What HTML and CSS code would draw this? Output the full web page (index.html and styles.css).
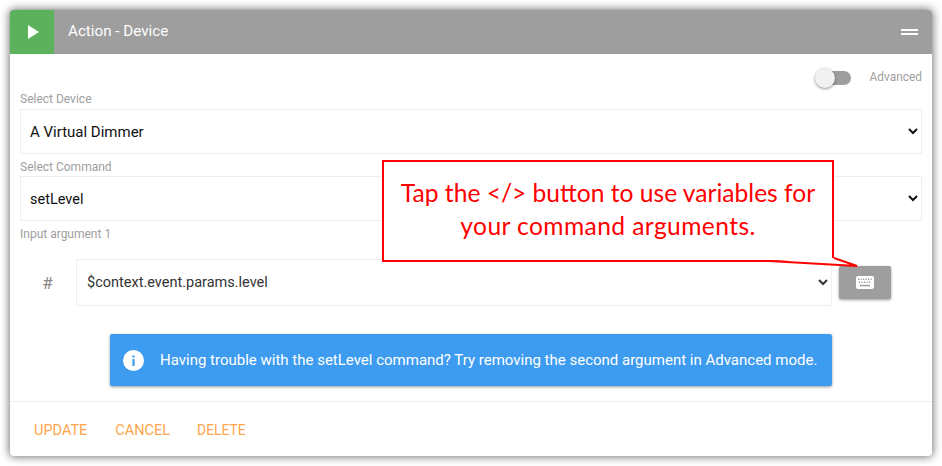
FILE: index.html
```html
<!DOCTYPE html>
<html lang="en">
<head>
<meta charset="utf-8">
<title>Action - Device</title>
<link rel="stylesheet" href="styles.css">
</head>
<body>
<div class="card">
  <header class="head">
    <div class="play"><svg width="11" height="14" viewBox="0 0 11 14"><path d="M0 0L11 7L0 14Z" fill="#fff"/></svg></div>
    <div class="title">Action - Device</div>
    <div class="menu"><span></span><span></span></div>
  </header>
  <main class="body">
    <div class="adv">
      <div class="toggle"><span class="track"></span><span class="knob"></span></div>
      <span class="adv-label">Advanced</span>
    </div>
    <label class="lbl first">Select Device</label>
    <select class="sel device"><option>A Virtual Dimmer</option></select>
    <label class="lbl cmd">Select Command</label>
    <select class="sel setlevel"><option>setLevel</option></select>
    <label class="lbl arg">Input argument 1</label>
    <div class="arg-row">
      <span class="hash">#</span>
      <select class="sel var"><option>$context.event.params.level</option></select>
      <button class="kbd">
        <svg width="18" height="13" viewBox="0 0 18 13"><rect width="18" height="13" rx="2" fill="#fff"/><g fill="#9e9e9e"><rect x="2" y="2.5" width="1.2" height="1.5"/><rect x="4.5" y="2.5" width="1.2" height="1.5"/><rect x="7" y="2.5" width="1.2" height="1.5"/><rect x="9.5" y="2.5" width="1.2" height="1.5"/><rect x="12" y="2.5" width="1.2" height="1.5"/><rect x="14.5" y="2.5" width="1.2" height="1.5"/><rect x="3" y="5.5" width="1.2" height="1.5"/><rect x="5.5" y="5.5" width="1.2" height="1.5"/><rect x="8" y="5.5" width="1.2" height="1.5"/><rect x="10.5" y="5.5" width="1.2" height="1.5"/><rect x="13" y="5.5" width="1.2" height="1.5"/><rect x="4" y="8.8" width="10" height="1.5"/></g></svg>
      </button>
    </div>
    <div class="alert">
      <svg class="info" width="21" height="21" viewBox="0 0 21 21"><circle cx="10.5" cy="10.5" r="10.5" fill="#fff"/><rect x="9.4" y="9" width="2.2" height="7" fill="#3d9bf0"/><rect x="9.4" y="5.4" width="2.2" height="2.2" fill="#3d9bf0"/></svg>
      <span>Having trouble with the setLevel command? Try removing the second argument in Advanced mode.</span>
    </div>
  </main>
  <footer class="foot">
    <button class="act">UPDATE</button>
    <button class="act">CANCEL</button>
    <button class="act del">DELETE</button>
  </footer>
</div>
<div class="callout">
  <svg class="tail" width="100" height="12" viewBox="0 0 100 12"><path d="M0 3L88 8L65 0" fill="#fff" stroke="#f00" stroke-width="2"/></svg>
  Tap the &lt;/&gt; button to use variables for<br><span class="line2">your command arguments.</span>
</div>
</body>
</html>
```
FILE: styles.css
```css
* { box-sizing: border-box; }
html, body { margin: 0; height: 100%; background: #fff; }
body { padding: 10px 10px 9px; font-family: Roboto, sans-serif; position: relative; overflow: hidden; }
.card { height: 446px; width: 922px; background: #fff; border-radius: 4px; box-shadow: 0 0 9px 1px rgba(0,0,0,.55); display: flex; flex-direction: column; overflow: hidden; }
.head { height: 44px; flex: none; background: #9e9e9e; display: flex; align-items: center; color: #fff; }
.play { width: 44px; height: 44px; background: #5cb25c; display: flex; align-items: center; justify-content: center; padding-left: 3px; }
.title { margin: 0 0 2px 14px; font-size: 15.2px; flex: 1; }
.menu { width: 17px; margin-right: 14px; display: flex; flex-direction: column; gap: 2px; }
.menu span { height: 2px; background: #fff; }
.body { flex: 1; padding: 0 10px; position: relative; }
.adv { display: flex; justify-content: flex-end; align-items: center; height: 20px; margin-top: 14px; }
.toggle { position: relative; width: 36px; height: 20px; margin-right: 19px; }
.track { position: absolute; left: 1px; right: 0; top: 3px; height: 14px; border-radius: 7px; background: #9e9e9e; }
.knob { position: absolute; left: 0; top: 0; width: 20px; height: 20px; border-radius: 50%; background: #f1f1f1; box-shadow: 0 1px 3px rgba(0,0,0,.45); }
.adv-label { font-size: 11.9px; color: #9e9e9e; margin-bottom: 2px; }
.lbl { display: block; font-size: 12px; line-height: 14px; color: #9e9e9e; }
.first { margin-top: 4px; height: 17px; }
.cmd { margin-top: 6px; height: 16px; }
.arg { margin-top: 6px; }
.sel { display: block; width: 100%; height: 45px; background: #fff; border: 1px solid #eee; border-radius: 0; padding: 0 5px; font-family: Roboto, sans-serif; font-size: 14.5px; color: #111; outline: none; }
.device { font-size: 15px; }
.setlevel { padding-top: 2px; }
.arg-row { display: flex; align-items: center; height: 47px; margin-top: 18px; }
.hash { width: 56px; padding-left: 16px; padding-right: 17px; text-align: center; font-size: 17px; color: #888; }
.var { width: 756px; height: 47px; padding: 0 6px; color: #333; }
.kbd { width: 52px; height: 33px; margin-left: 7px; border: 0; border-radius: 2px; background: #9e9e9e; box-shadow: 0 1px 3px rgba(0,0,0,.4); display: flex; align-items: center; justify-content: center; padding: 0; }
.alert { margin: 28px 0 0 90px; width: 722px; height: 52px; background: #3d9bf0; border-radius: 2px; box-shadow: 0 1px 3px rgba(0,0,0,.4); display: flex; align-items: center; color: #fff; font-size: 15px; padding-left: 13px; }
.info { flex: none; margin-right: 16px; }
.foot { height: 55px; flex: none; border-top: 1px solid #eee; display: flex; align-items: center; padding: 2px 0 0 24px; gap: 28px; }
.act { border: 0; padding: 0; background: none; font-family: Roboto, sans-serif; font-size: 14.5px; color: #ffa64d; }
.del { font-size: 13.8px; margin-left: -1px; }
.callout { position: absolute; left: 382px; top: 160px; width: 452px; height: 102px; background: #fff; border: 2px solid #f00; color: #f00; font-family: Lato, sans-serif; font-size: 24.6px; line-height: 33px; text-align: center; padding-top: 14px; }
.line2 { letter-spacing: .4px; }
.tail { position: absolute; left: 385px; top: 96px; overflow: visible; }
```
